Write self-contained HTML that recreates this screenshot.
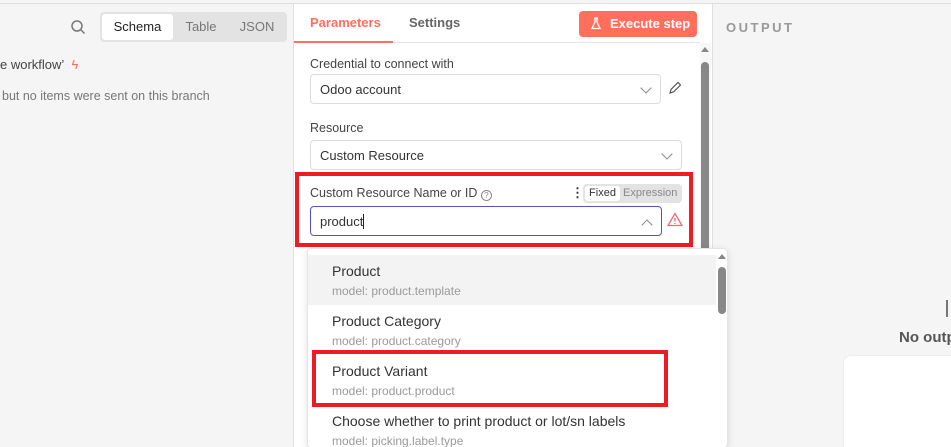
<!DOCTYPE html>
<html><head><style>
*{box-sizing:border-box;margin:0;padding:0}
html,body{width:951px;height:447px;overflow:hidden}
body{position:relative;font-family:"Liberation Sans",sans-serif;background:#f5f5f5;color:#333}
.a{position:absolute;white-space:nowrap}
.sel{position:absolute;border:1px solid #dcdcdc;border-radius:4px;background:#fff;font-size:13px;padding-left:9px;display:flex;align-items:center;color:#333}
.chev{position:absolute;right:10px;top:9px;width:8px;height:8px;border-right:1.3px solid #888;border-bottom:1.3px solid #888;transform:rotate(45deg)}
.lbl{position:absolute;font-size:12.5px;color:#444}
.it{position:absolute;left:0;width:405px;height:50px;padding-left:24px;white-space:nowrap}
.it b{display:block;font-weight:normal;font-size:14px;color:#333;margin-top:8px}
.it i{display:block;font-style:normal;font-size:12px;color:#9a9a9a;margin-top:5px}
</style></head><body>
<div class="a" style="left:0;top:0;width:951px;height:4px;border-bottom:1px solid #ddd;background:#f5f5f5"></div>
<svg class="a" style="left:70px;top:19px" width="16" height="16" viewBox="0 0 16 16"><circle cx="7" cy="7" r="5" fill="none" stroke="#777" stroke-width="1.5"/><path d="M11 11l3.5 3.5" stroke="#777" stroke-width="1.5"/></svg>
<div class="a" style="left:100px;top:12px;width:187px;height:30px;background:#e3e3e3;border-radius:4px"></div>
<div class="a" style="left:102px;top:14px;width:71px;height:26px;background:#fff;border-radius:3px"></div>
<div class="a" style="left:102px;top:19px;width:71px;text-align:center;font-size:13px;color:#222">Schema</div>
<div class="a" style="left:176px;top:19px;width:50px;text-align:center;font-size:13px;color:#777">Table</div>
<div class="a" style="left:232px;top:19px;width:50px;text-align:center;font-size:13px;color:#777">JSON</div>
<div class="a" style="left:0;top:57px;font-size:13px;color:#444">e workflow’ <span style="color:#ff6f5c;margin-left:4px">ϟ</span></div>
<div class="a" style="left:2px;top:89px;font-size:12.5px;color:#777">but no items were sent on this branch</div>
<div class="a" style="left:293px;top:4px;width:420px;height:443px;background:#fff;border-left:1px solid #e0e0e0;border-right:1px solid #e0e0e0"></div>
<div class="a" style="left:294px;top:42px;width:406px;height:1px;background:#e3e3e3"></div>
<div class="a" style="left:294px;top:41px;width:99px;height:2px;background:#ff6f5c"></div>
<div class="a" style="left:310px;top:15px;font-size:13px;color:#ff6f5c;font-weight:bold">Parameters</div>
<div class="a" style="left:409px;top:15px;font-size:13px;color:#666;font-weight:bold">Settings</div>
<div class="a" style="left:579px;top:11px;width:118px;height:26px;background:#ff6f5c;border-radius:4px;color:#fff;font-size:13px;font-weight:bold;padding:5px 0 0 31px">Execute step</div>
<svg class="a" style="left:591px;top:17px" width="10" height="13" viewBox="0 0 10 13"><path d="M3 1h4M4 1v4L1 11.5h8L6 5V1" fill="none" stroke="#fff" stroke-width="1.3"/></svg>
<div class="a" style="left:700px;top:43px;width:11px;height:404px;background:#f7f7f7"></div>
<div class="a" style="left:701px;top:47px;border:4px solid transparent;border-bottom:5px solid #888;border-top:0"></div>
<div class="a" style="left:701px;top:62px;width:8px;height:385px;background:#888;border-radius:4px"></div>
<div class="lbl" style="left:310px;top:57px">Credential to connect with</div>
<div class="sel" style="left:310px;top:74px;width:351px;height:30px">Odoo account<span class="chev"></span></div>
<svg class="a" style="left:667px;top:81px" width="15" height="15" viewBox="0 0 15 15"><path d="M3 12l1-3.5 7-7 2.5 2.5-7 7z" fill="none" stroke="#555" stroke-width="1.2"/></svg>
<div class="lbl" style="left:310px;top:121px">Resource</div>
<div class="sel" style="left:310px;top:140px;width:372px;height:30px">Custom Resource<span class="chev"></span></div>
<div class="a" style="left:295px;top:172px;width:398px;height:75px;border:4px solid #ed1c24"></div>
<div class="lbl" style="left:310px;top:186px">Custom Resource Name or ID <span style="display:inline-block;width:11px;height:11px;border:1px solid #888;border-radius:50%;font-size:8px;text-align:center;line-height:9px;color:#888;vertical-align:-1px">?</span></div>
<div class="a" style="left:571px;top:185px;font-size:13px;font-weight:bold;color:#333">⋮</div>
<div class="a" style="left:583px;top:184px;width:99px;height:19px;background:#e3e3e3;border-radius:4px"></div>
<div class="a" style="left:585px;top:186px;width:35px;height:15px;background:#fff;border-radius:3px;font-size:11px;text-align:center;line-height:15px;color:#333">Fixed</div>
<div class="a" style="left:623px;top:186px;font-size:11px;line-height:15px;color:#888">Expression</div>
<div class="sel" style="left:310px;top:206px;width:352px;height:30px;border-color:#5b4fc7">product<span style="display:inline-block;width:1px;height:15px;background:#222"></span><span class="chev" style="transform:rotate(225deg);top:14px"></span></div>
<svg class="a" style="left:667px;top:212px" width="16" height="15" viewBox="0 0 16 15"><path d="M8 1.5L1 13.5h14z" fill="none" stroke="#f06b74" stroke-width="1.3"/><path d="M8 6v3.5M8 11v1" stroke="#f06b74" stroke-width="1.4"/></svg>
<div class="a" style="left:726px;top:20px;font-size:13px;font-weight:bold;color:#999;letter-spacing:2.5px">OUTPUT</div>
<div class="a" style="left:946px;top:300px;width:2px;height:17px;background:#777"></div>
<div class="a" style="left:899px;top:329px;font-size:15px;font-weight:bold;color:#555">No outp</div>
<div class="a" style="left:843px;top:355px;width:120px;height:100px;background:#fff;border-radius:8px;border:1px solid #eee"></div>
<div class="a" style="left:307px;top:248px;width:421px;height:200px;background:#fff;border:1px solid #e5e5e5;border-radius:4px;box-shadow:0 2px 8px rgba(0,0,0,.12);overflow:hidden">
<div class="it" style="top:6px;background:#f3f3f3;width:408px"><b>Product</b><i>model: product.template</i></div>
<div class="it" style="top:56px"><b>Product Category</b><i>model: product.category</i></div>
<div class="it" style="top:106px"><b>Product Variant</b><i>model: product.product</i></div>
<div class="it" style="top:156px;width:410px"><b>Choose whether to print product or lot/sn labels</b><i>model: picking.label.type</i></div>
<div class="a" style="left:410px;top:5px;border:4px solid transparent;border-bottom:5px solid #888;border-top:0"></div>
<div class="a" style="left:410px;top:18px;width:8px;height:47px;background:#888;border-radius:4px"></div>
</div>
<div class="a" style="left:312px;top:350px;width:356px;height:57px;border:4px solid #ed1c24"></div>
</body></html>
